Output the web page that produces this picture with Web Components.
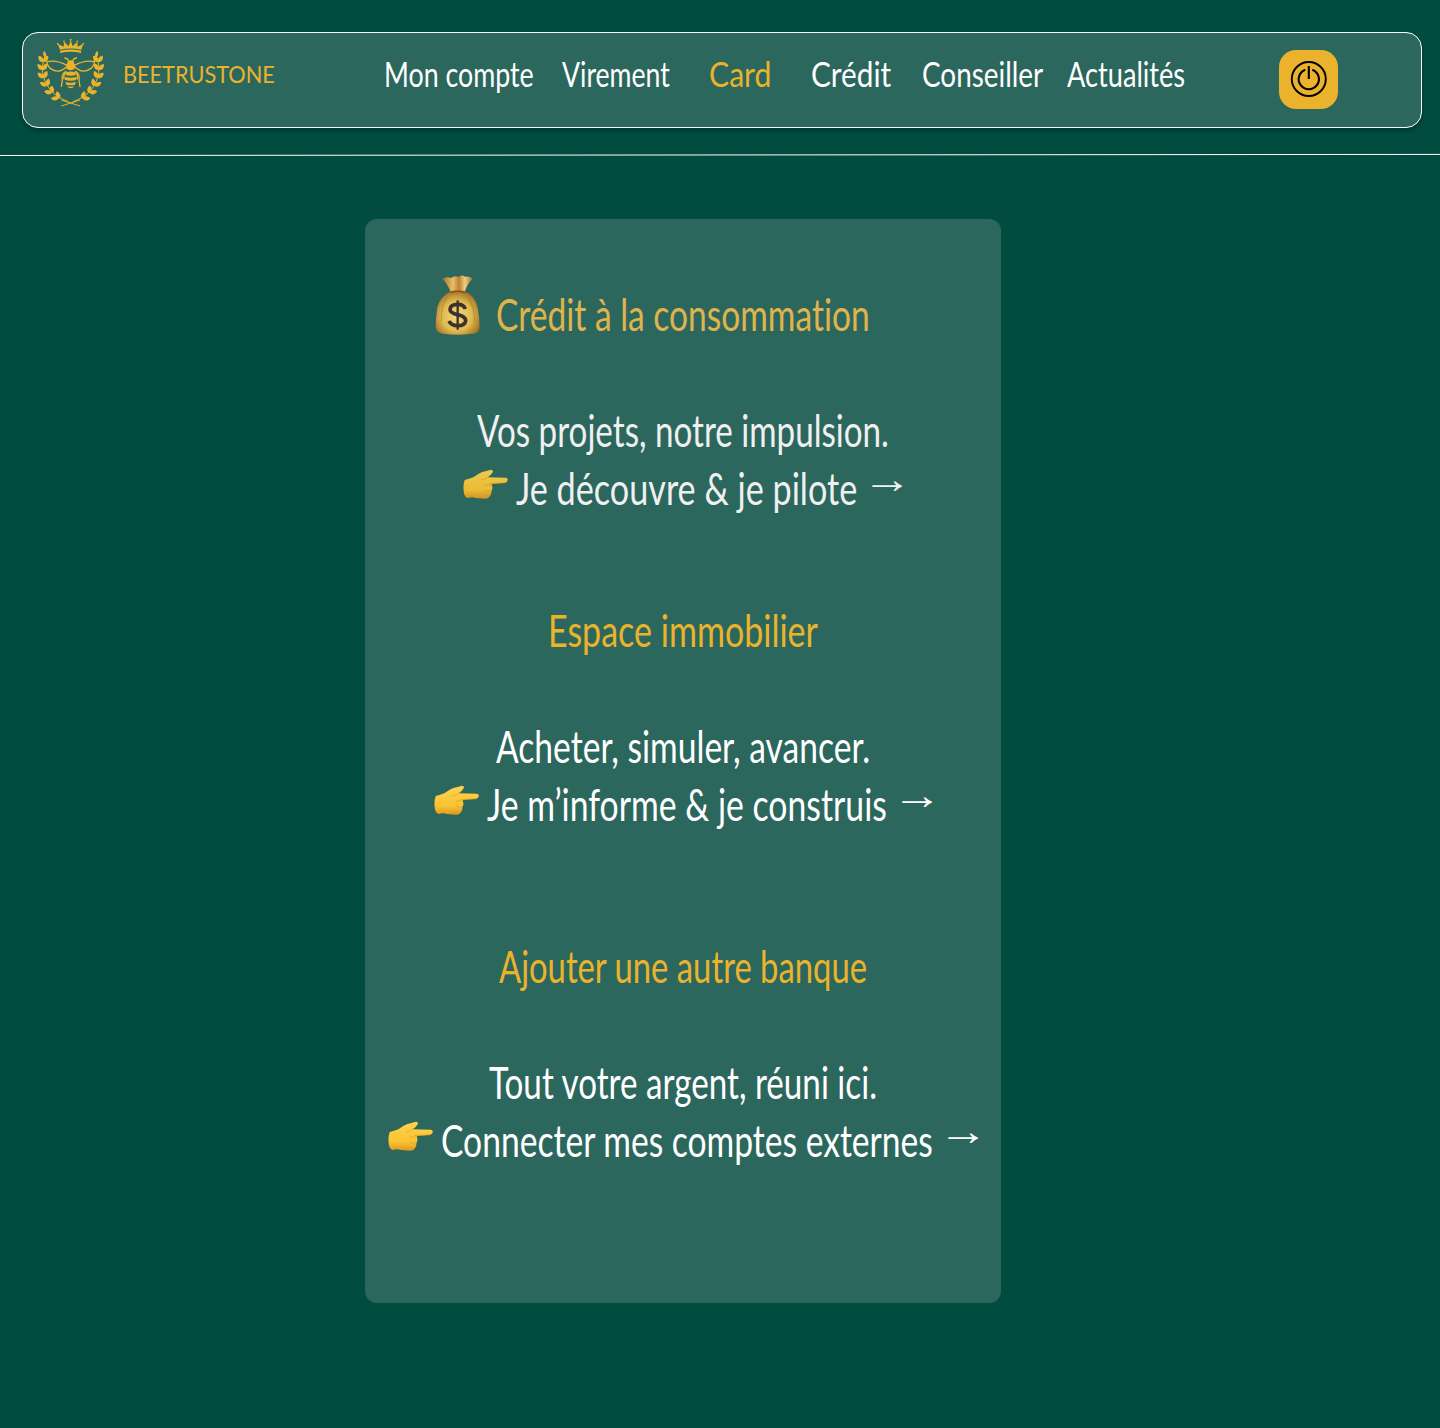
<!DOCTYPE html>
<html lang="fr">
<head>
<meta charset="utf-8">
<title>Beetrustone</title>
<style>
html,body{margin:0;background:#004d40}
body{font-family:Lato,"Open Sans",sans-serif;color:#fff;min-height:1428px;font-variant-ligatures:none}
</style>
</head>
<body>
<bank-page></bank-page>
<script>
const define = (name, html, setup) => {
  customElements.define(name, class extends HTMLElement {
    connectedCallback() {
      if (this.shadowRoot) return;
      this.attachShadow({mode: 'open'}).innerHTML = html;
      if (setup) setup(this, this.shadowRoot);
    }
  });
};

/* Text condensed to a given width */
define('slim-text', `<style>
  :host{display:block;flex:none;white-space:nowrap;height:var(--lh,58px);line-height:var(--lh,58px)}
  span{display:inline-block;transform-origin:0 50%}
</style><span><slot></slot></span>`, (el, root) => {
  const w = +el.getAttribute('w');
  el.style.width = w + 'px';
  const span = root.querySelector('span');
  span.style.transform = `scaleX(${w / span.offsetWidth})`;
});

define('bee-logo', `<style>:host{display:block;width:68px;height:70px}svg{display:block}</style>
<svg width="68" height="70" viewBox="50 38 204 210" fill="#ebb32c" stroke="none">
  <path d="M119 73 L112 55 L130 64 L131 49 L145 63 L151 44 L157 63 L171 49 L172 64 L189 55 L183 73 Q151 66 119 73Z"/>
  <path d="M119 76 Q151 69 183 76 L182 83 Q151 76 120 83Z"/>
  <circle cx="112" cy="55" r="2.5"/><circle cx="131" cy="48" r="2.5"/><circle cx="151" cy="43" r="3"/><circle cx="171" cy="48" r="2.5"/><circle cx="189" cy="55" r="2.5"/>
  <g class="half"></g><g class="half" transform="translate(302 0) scale(-1 1)"></g>
  <path d="M142 108 Q151 101 160 108 L161 114 Q167 121 162 132 Q151 137 140 132 Q135 121 141 114Z"/>
  <path d="M138 141 Q151 136 164 141 L167 149 Q151 154 135 149Z"/>
  <path d="M133 155 Q151 160 169 155 L168 164 Q151 169 134 164Z"/>
  <path d="M135 170 Q151 175 167 170 L164 178 Q151 182 138 178Z"/>
  <path d="M140 182 Q151 186 162 182 Q157 189 151 189 Q145 189 140 182Z"/>
</svg>`, (el, root) => {
  const sprigs = [[68,104,3],[66,128,-1],[69,152,-9],[79,176,-24],[94,197,-40],[115,213,-54]];
  const leaf = 'M0 0C-9 -4 -9 -16 -1 -23C7 -16 9 -5 0 0Z';
  let s = '<path d="M71 76Q82 87 76 99Q64 90 71 76Z"/>';
  sprigs.forEach(([x, y, a]) => {
    s += `<path d="${leaf}" transform="translate(${x} ${y + 6}) rotate(${a - 35})"/><path d="${leaf}" transform="translate(${x + 2} ${y + 6}) rotate(${a + 36})"/>`;
  });
  s += '<path d="M74 92Q61 125 70 157Q82 196 119 218M123 242L179 224M114 215Q130 223 145 230" fill="none" stroke="#ebb32c" stroke-width="3"/>'
    + '<path d="M141 121Q110 103 80 109Q79 119 91 130Q108 142 123 135Q134 130 141 123M145 108Q143 98 132 98M138 137Q122 145 126 164L123 185M138 139Q128 147 131 162" fill="none" stroke="#ebb32c" stroke-width="4"/>';
  root.querySelectorAll('.half').forEach(g => g.innerHTML = s);
});

define('power-button', `<style>
  :host{display:block;flex:none;width:59px;height:59px}
  button{display:flex;align-items:center;justify-content:center;width:59px;height:59px;padding:0;border:0;border-radius:17px;background:#ebb32c}
</style><button aria-label="Déconnexion"><svg width="37" height="37" viewBox="0 0 37 37" fill="none" stroke="#000">
<circle cx="18.8" cy="18" r="17" stroke-width="1.9"/><path d="M15.3 8.7A10.1 10.1 0 1 0 22.3 8.7" stroke-width="2.1"/><path d="M18.8 5V18" stroke-width="2.1"/></svg></button>`);

define('bank-header', `<style>
  :host{display:block;padding:32px 18px 0 22px}
  header{box-sizing:border-box;height:96px;border:1px solid #fff;border-radius:16px;background:#2c675d;box-shadow:0 3px 5px rgba(0,0,0,.28);display:flex;align-items:flex-start;padding-left:14px}
  bee-logo{margin:5px 18px 0 0}
  .brand{--lh:30px;font-size:24px;color:#ebb32c;margin:26px 109px 0 0}
  nav{--lh:48px;display:flex;font-size:35px;padding-top:16px;width:895px;flex:none}
  .on{color:#ebb32c}
  power-button{padding-top:17px}
</style>
<header><bee-logo></bee-logo><slim-text class="brand" w="152">BEETRUSTONE</slim-text>
<nav>
<slim-text w="150" style="margin-right:28px">Mon compte</slim-text>
<slim-text w="108" style="margin-right:39px">Virement</slim-text>
<slim-text w="62" class="on" style="margin-right:40px">Card</slim-text>
<slim-text w="80" style="margin-right:31px">Crédit</slim-text>
<slim-text w="121" style="margin-right:24px">Conseiller</slim-text>
<slim-text w="118">Actualités</slim-text>
</nav><power-button></power-button></header>`);

define('money-bag', `<style>:host{display:block;flex:none;width:46px;height:60px}svg{display:block}</style>
<svg width="46" height="60" viewBox="30 31 138 180">
<defs><radialGradient id="b" cx=".48" cy=".58" r=".62"><stop offset="0" stop-color="#f0d77c"/><stop offset=".55" stop-color="#e0bb50"/><stop offset="1" stop-color="#99621c"/></radialGradient>
<linearGradient id="n"><stop offset="0" stop-color="#a86e29"/><stop offset=".35" stop-color="#e6bf6a"/><stop offset=".55" stop-color="#bd8034"/><stop offset=".75" stop-color="#efcf80"/><stop offset="1" stop-color="#a76c27"/></linearGradient></defs>
<path d="M77 82Q67 56 52 42Q68 34 78 40Q90 32 100 37Q111 28 120 36Q133 34 143 42Q126 58 119 82Z" fill="url(#n)"/>
<path d="M77 80Q98 74 119 80Q150 93 158 128Q164 157 164 190Q161 209 140 207Q98 213 55 207Q34 206 32 188Q32 160 37 127Q46 96 77 80Z" fill="url(#b)"/>
<path d="M76 84Q98 76 121 84" fill="none" stroke="#885019" stroke-width="4"/>
<path d="M68 96Q49 118 49 170M128 96Q149 125 149 173" fill="none" stroke="#a97225" stroke-width="3" opacity=".55"/>
<path d="M121 133Q116 119 99 119Q76 119 75 134Q75 145 97 150Q122 155 122 168Q120 183 98 183Q78 183 72 169" fill="none" stroke="#3d302d" stroke-width="11"/><path d="M98 107V195" fill="none" stroke="#3d302d" stroke-width="7"/>
</svg>`);

define('point-hand', `<style>:host{display:block;flex:none;width:45px;height:30px}svg{display:block}</style>
<svg width="45" height="30" viewBox="24 207 135 90">
<defs><linearGradient id="h" x2="0" y2="1"><stop offset="0" stop-color="#ffd34e"/><stop offset=".7" stop-color="#fbc332"/><stop offset="1" stop-color="#dc981d"/></linearGradient></defs>
<path d="M29 240Q42 237 55 232Q67 222 82 216Q99 211 108 209Q116 210 113 217Q109 225 98 232L153 233Q160 235 158 241Q157 247 151 248L112 251Q109 255 112 260Q113 268 109 273Q110 284 105 287Q101 297 89 296L62 294Q51 289 39 294Q29 292 27 280Q23 257 29 240Z" fill="url(#h)"/>
<path d="M79 240Q90 239 98 232M104 251L151 248M90 256Q106 251 110 258M91 271Q102 276 109 273M88 285Q99 290 105 287" fill="none" stroke="#e2a22a" stroke-width="2.3" stroke-linecap="round"/>
</svg>`);

define('offer-block', `<style>
  :host{display:flex;flex-direction:column;align-items:center;font-size:45px;height:232px;margin-bottom:var(--after,0)}
  .t{color:#ebb32c;display:flex;margin-bottom:58px;height:58px}
  .r{display:flex;height:58px}
  point-hand{margin:10px 8px 0 0}
  .arrow{font-family:"Liberation Serif",serif;font-size:40px;margin:-8px -9px 0 5px}
  money-bag{margin:-10px 15px 0 0}
  :host([soft]) .t{color:#e0b44c;padding-right:62px}
  :host([soft]) .r{color:#f0f0f0}
  :host([soft]) point-hand{opacity:.92}
</style><div class="t"></div><div class="r l"></div><div class="r a"></div>`, (el, root) => {
  const g = n => el.getAttribute(n), [a, b, c] = g('widths').split(' ');
  root.querySelector('.t').innerHTML = (el.hasAttribute('soft') ? '<money-bag></money-bag>' : '') + `<slim-text w="${a}">${g('heading')}</slim-text>`;
  root.querySelector('.l').innerHTML = `<slim-text w="${b}">${g('line')}</slim-text>`;
  root.querySelector('.a').innerHTML = `<point-hand></point-hand><slim-text w="${c}">${g('action').replace('&', '&amp;')}</slim-text><slim-text class="arrow" w="50">→</slim-text>`;
});

define('bank-page', `<style>
  :host{display:block}
  .rule{display:block;margin-top:25px}
  main{box-sizing:border-box;width:636px;height:1084px;margin:62px 0 0 365px;padding-top:66px;border-radius:12px;background:#2c675d}
</style>
<bank-header></bank-header>
<svg class="rule" width="1440" height="4"><path d="M0 2.5L1440 1.4" stroke="#fff" stroke-width="1"/></svg>
<main>
<offer-block soft style="--after:84px" widths="374 412 341" heading="Crédit à la consommation" line="Vos projets, notre impulsion." action="Je découvre &amp; je pilote"></offer-block>
<offer-block style="--after:104px" widths="270 374 400" heading="Espace immobilier" line="Acheter, simuler, avancer." action="Je m’informe &amp; je construis"></offer-block>
<offer-block widths="368 388 492" heading="Ajouter une autre banque" line="Tout votre argent, réuni ici." action="Connecter mes comptes externes"></offer-block>
</main>`);
</script>
</body>
</html>
